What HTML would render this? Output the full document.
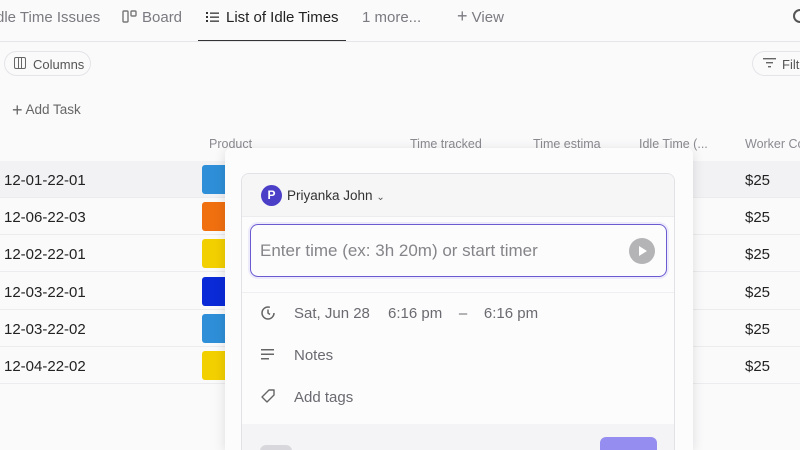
<!DOCTYPE html>
<html><head><meta charset="utf-8"><style>
*{box-sizing:border-box;margin:0;padding:0}
html,body{width:800px;height:450px;overflow:hidden}
body{background:#fafafb;font-family:"Liberation Sans",sans-serif;color:#2a2a2e;position:relative}
.a{position:absolute;white-space:nowrap}
.tab{font-size:15px;color:#7a7a80;top:9px}
.hdr{font-size:12.5px;color:#8a8a90;top:137px}
.row{position:absolute;left:0;width:800px;height:37px;border-bottom:1px solid #ececef}
.id{position:absolute;left:4px;font-size:15px;color:#222;top:11px}
.sw{position:absolute;left:202px;width:30px;height:29px;top:4px;border-radius:3px}
.cost{position:absolute;left:745px;font-size:15px;color:#222;top:11px}
.pop{position:absolute;left:225px;top:148px;width:468px;height:302px;background:#fcfcfd;border-radius:6px 6px 0 0;box-shadow:0 2px 12px rgba(0,0,0,.12);overflow:hidden}
.card{position:absolute;left:16px;top:25px;width:434px;height:277px;background:#fcfcfd;border:1px solid #e2e2e6;border-bottom:none;border-radius:8px 8px 0 0;overflow:hidden}
.lbl{font-size:15px;color:#6a6a70}
</style></head><body>
<div class="a tab" style="left:-4px">dle Time Issues</div>
<svg class="a" style="left:122px;top:10px" width="16" height="14"><rect x="1" y="1" width="5" height="11" rx="1" fill="none" stroke="#777" stroke-width="1.4"/><rect x="9" y="1" width="5" height="5" rx="1" fill="none" stroke="#777" stroke-width="1.4"/></svg>
<div class="a tab" style="left:142px">Board</div>
<svg class="a" style="left:206px;top:11px" width="14" height="12"><g fill="#333"><rect x="0" y="1" width="2" height="2"/><rect x="0" y="5" width="2" height="2"/><rect x="0" y="9" width="2" height="2"/><rect x="4" y="1.5" width="9" height="1.3"/><rect x="4" y="5.5" width="9" height="1.3"/><rect x="4" y="9.5" width="9" height="1.3"/></g></svg>
<div class="a tab" style="left:226px;color:#222">List of Idle Times</div>
<div class="a" style="left:198px;top:40px;width:148px;height:2px;background:#333"></div>
<div class="a tab" style="left:362px">1 more...</div>
<div class="a tab" style="left:457px"><span style="font-size:18px;line-height:14px">+</span> View</div>
<div class="a" style="left:793px;top:9px;width:14px;height:14px;border:2px solid #555;border-radius:50%"></div>
<div class="a" style="left:0;top:41px;width:800px;height:1px;background:#e6e6ea"></div>
<div class="a" style="left:4px;top:51px;width:87px;height:25px;border:1px solid #e4e4e8;border-radius:13px;font-size:13px;color:#555;padding:5px 0 0 28px;background:#fafafb">Columns</div>
<div class="a" style="left:14px;top:57px;width:12px;height:12px;border:1.4px solid #666;border-radius:2px;background:linear-gradient(90deg,transparent 3px,#666 3px,#666 4px,transparent 4px,transparent 6px,#666 6px,#666 7px,transparent 7px)"></div>
<div class="a" style="left:752px;top:51px;width:48px;height:25px;border:1px solid #e4e4e8;border-right:none;border-radius:13px 0 0 13px;font-size:13px;color:#555;padding:5px 0 0 29px;overflow:hidden">Filter</div>
<svg class="a" style="left:763px;top:57px" width="14" height="12"><g fill="#666"><rect y="1" width="13" height="1.4"/><rect x="3" y="5" width="7" height="1.4"/><rect x="5" y="9" width="3" height="1.4"/></g></svg>
<div class="a" style="left:12px;top:100px;font-size:13.5px;color:#666"><span style="font-size:18px;vertical-align:-2px">+</span> Add Task</div>
<div class="a hdr" style="left:209px">Product</div>
<div class="a hdr" style="left:410px">Time tracked</div>
<div class="a hdr" style="left:533px">Time estima</div>
<div class="a hdr" style="left:639px">Idle Time (...</div>
<div class="a hdr" style="left:745px">Worker Co</div>
<div class="row" style="top:161px;background:#f2f2f4"><div class="id">12-01-22-01</div><div class="sw" style="background:#2e8fd8"></div><div class="cost">$25</div></div>
<div class="row" style="top:198px"><div class="id">12-06-22-03</div><div class="sw" style="background:#f07010"></div><div class="cost">$25</div></div>
<div class="row" style="top:235px"><div class="id">12-02-22-01</div><div class="sw" style="background:#f2d000"></div><div class="cost">$25</div></div>
<div class="row" style="top:273px"><div class="id">12-03-22-01</div><div class="sw" style="background:#0a2ad8"></div><div class="cost">$25</div></div>
<div class="row" style="top:310px"><div class="id">12-03-22-02</div><div class="sw" style="background:#2e8fd8"></div><div class="cost">$25</div></div>
<div class="row" style="top:347px"><div class="id">12-04-22-02</div><div class="sw" style="background:#f2d000"></div><div class="cost">$25</div></div>
<div class="pop"><div class="card">
 <div class="a" style="left:0;top:0;width:434px;height:43px;background:#f6f6f7;border-bottom:1px solid #ececef"></div>
 <div class="a" style="left:19px;top:11px;width:21px;height:21px;border-radius:50%;background:#4b3fc8;color:#fff;font-size:12px;font-weight:bold;text-align:center;line-height:21px">P</div>
 <div class="a" style="left:45px;top:14px;font-size:13.5px;color:#333">Priyanka John <span style="font-size:10px;color:#555">⌄</span></div>
 <div class="a" style="left:8px;top:50px;width:417px;height:53px;border:1.5px solid #6a5bd0;border-radius:8px;background:#fcfcfd;box-shadow:0 0 0 2px #eceafb"></div>
 <div class="a" style="left:18px;top:67px;font-size:17px;color:#858589">Enter time (ex: 3h 20m) or start timer</div>
 <div class="a" style="left:387px;top:64px;width:26px;height:26px;border-radius:50%;background:#b4b4b6"></div>
 <div class="a" style="left:397px;top:72px;width:0;height:0;border-left:8px solid #fff;border-top:5px solid transparent;border-bottom:5px solid transparent"></div>
 <div class="a" style="left:0;top:118px;width:434px;height:1px;background:#efeff1"></div>
 <svg class="a" style="left:18px;top:131px" width="16" height="16"><circle cx="8" cy="8" r="6" fill="none" stroke="#666" stroke-width="1.5" stroke-dasharray="30 8"/><path d="M8 4.5V8l2 1.5" fill="none" stroke="#666" stroke-width="1.5"/></svg>
 <div class="a lbl" style="left:52px;top:131px">Sat, Jun 28</div>
 <div class="a lbl" style="left:146px;top:131px">6:16 pm &nbsp;&nbsp;&nbsp;–&nbsp;&nbsp;&nbsp; 6:16 pm</div>
 <svg class="a" style="left:19px;top:175px" width="14" height="12"><g fill="#666"><rect y="0" width="13" height="1.5"/><rect y="4.5" width="13" height="1.5"/><rect y="9" width="8" height="1.5"/></g></svg>
 <div class="a lbl" style="left:52px;top:173px">Notes</div>
 <svg class="a" style="left:18px;top:214px" width="16" height="16"><path d="M9 2h5v5l-7 7-5-5z" fill="none" stroke="#666" stroke-width="1.4" stroke-linejoin="round"/></svg>
 <div class="a lbl" style="left:52px;top:215px">Add tags</div>
 <div class="a" style="left:0;top:250px;width:434px;height:27px;background:#f4f4f6"></div>
 <div class="a" style="left:18px;top:271px;width:32px;height:6px;border-radius:6px 6px 0 0;background:#d8d8dc"></div>
 <div class="a" style="left:358px;top:263px;width:57px;height:14px;border-radius:6px 6px 0 0;background:#958ef0"></div>
</div></div>
</body></html>
